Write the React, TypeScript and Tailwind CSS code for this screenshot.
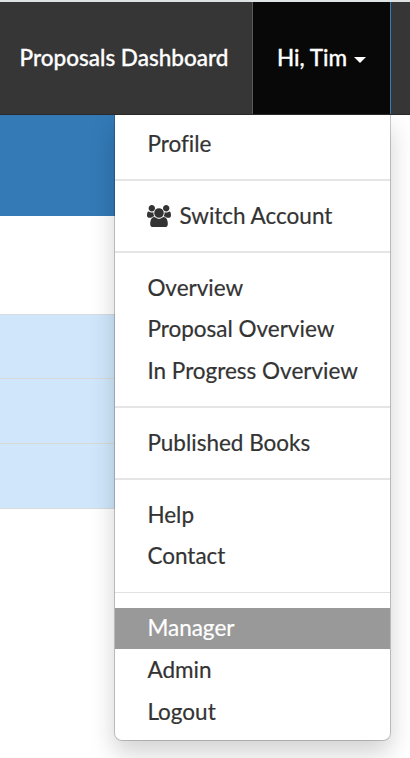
import clsx from 'clsx'

const groups = [
    [{ label: 'Profile', height: 'h-[42px]' }],
    [{ label: 'Switch Account', height: 'h-[42px]', icon: true }],
    [
        { label: 'Overview', height: 'h-[42px]' },
        { label: 'Proposal Overview', height: 'h-[41px] pb-0.5' },
        { label: 'In Progress Overview', height: 'h-[42px]' },
    ],
    [{ label: 'Published Books', height: 'h-[42px]' }],
    [
        { label: 'Help', height: 'h-[42px]' },
        { label: 'Contact', height: 'h-[41px] pb-0.5' },
    ],
    [
        { label: 'Manager', height: 'h-[41px] pb-0.5', active: true },
        { label: 'Admin', height: 'h-[42px]' },
        { label: 'Logout', height: 'h-[42px]' },
    ],
]

function UsersIcon() {
    return (
        <svg viewBox="0 0 1920 1792" className="w-6 h-[22.4px] mr-2 shrink-0" fill="currentColor">
            <path d="M593 896q-162 5-265 128h-134q-82 0-138-40.500t-56-118.500q0-353 124-353 6 0 43.500 21t97.500 42.500 119 21.500q67 0 133-23-5 37-5 66 0 139 81 256zM1664 1533q0 120-73 189.500t-194 69.500h-874q-121 0-194-69.500t-73-189.500q0-53 3.500-103.500t14-109 26.500-108.500 43-97.500 62-81 85.500-53.500 111.500-20q10 0 43 21.500t73 48 107 48 135 21.500 135-21.500 107-48 73-48 43-21.500q61 0 111.500 20t85.500 53.500 62 81 43 97.500 26.500 108.500 14 109 3.500 103.500zM640 256q0 106-75 181t-181 75-181-75-75-181 75-181 181-75 181 75 75 181zM1344 640q0 159-112.500 271.500t-271.500 112.500-271.500-112.500-112.500-271.500 112.500-271.500 271.500-112.500 271.500 112.500 112.500 271.500zM1920 865q0 78-56 118.500t-138 40.500h-134q-103-123-265-128 81-117 81-256 0-29-5-66 66 23 133 23 59 0 119-21.500t97.500-42.500 43.500-21q124 0 124 353zM1792 256q0 106-75 181t-181 75-181-75-75-181 75-181 181-75 181 75 75 181z" />
        </svg>
    )
}

function Navbar() {
    return (
        <nav className="flex h-[115px] border-t-2 border-b border-t-[#dfe3e4] border-b-[#292929] bg-[#363636] text-white text-[22.5px] font-medium">
            <a className="flex items-center w-[252px] pl-[19.5px] whitespace-nowrap [-webkit-text-stroke:0.3px]">Proposals Dashboard</a>
            <a className="flex items-center w-[139px] pl-6 border-l border-r border-l-[#5b5b5b] border-r-[#337ab7] bg-[#080808] whitespace-nowrap [-webkit-text-stroke:0.3px]">
                Hi, Tim
                <span className="ml-[7px] mt-[3px] border-x-6 border-t-6 border-x-transparent border-t-white" />
            </a>
        </nav>
    )
}

function AccountMenu() {
    return (
        <div className="absolute left-[114px] top-[115px] w-[277px] h-[626px] pt-2 bg-white bg-clip-padding border border-t-0 border-black/20 rounded-b-lg shadow-[0_12px_24px_rgba(0,0,0,0.175)] text-[22.5px] text-[#333] [-webkit-text-stroke:0.2px]">
            {groups.map((items, i) => (
                <div
                    key={i}
                    className={clsx(
                        i > 0 && i < 5 && 'mt-[14px] pt-[14px] border-t-2 border-[#e5e5e5]',
                        i === 5 && 'mt-[15px] pt-[15px] border-t border-[#e1e1e1]',
                    )}
                >
                    {items.map((item: any) => (
                        <a
                            key={item.label}
                            className={clsx('flex items-center pl-[32.4px] whitespace-nowrap', item.height, item.active && 'bg-[#999] text-white')}
                        >
                            {item.icon && <UsersIcon />}
                            {item.label}
                        </a>
                    ))}
                </div>
            ))}
        </div>
    )
}

export default function App() {
    return (
        <div className="relative w-full h-[758px] overflow-hidden bg-white font-['Lato',sans-serif] [font-variant-ligatures:none]">
            <div className="relative z-10">
                <Navbar />
            </div>
            <div className="w-[300px]">
                <div className="h-[101px] bg-[#337ab7]" />
                <div className="mt-[98px] bg-[#d0e7fb]">
                    <div className="h-16 border-t border-[#d9dada]" />
                    <div className="h-[65px] border-t border-[#d9dada]" />
                    <div className="h-[66px] border-y border-[#d9dada]" />
                </div>
            </div>
            <AccountMenu />
        </div>
    )
}
